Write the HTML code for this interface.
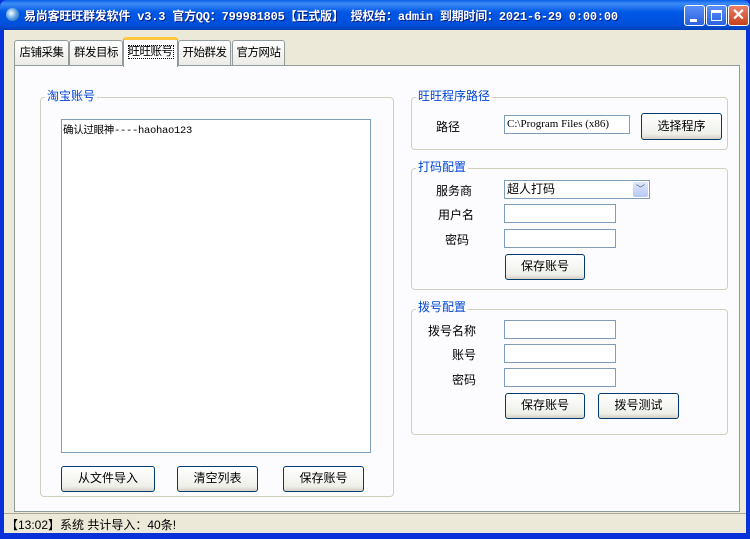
<!DOCTYPE html>
<html><head><meta charset="utf-8"><style>
*{margin:0;padding:0;box-sizing:border-box}
body{width:750px;height:539px;overflow:hidden;background:#0831d9;font-family:"Liberation Sans","Noto Sans CJK SC","WenQuanYi Zen Hei",sans-serif;font-size:12px;color:#000;position:relative}
.a{position:absolute}
#title{left:0;top:0;width:750px;height:30px;background:linear-gradient(#0a5fe8 0%,#3d8bf5 12%,#0058e6 40%,#0050dc 80%,#0340b8 100%);border-radius:7px 7px 0 0}
#title span{position:absolute;left:24px;top:7px;color:#fff;font-weight:bold;font-size:12px;font-family:"Liberation Mono","Noto Sans CJK SC",monospace;white-space:nowrap;text-shadow:1px 1px #0a1f80;letter-spacing:-0.2px}
#body{left:4px;top:30px;width:742px;height:503px;background:#ece9d8}
.tb{height:25px;background:linear-gradient(#fff,#ecebe6);border:1px solid #919b9c;border-bottom:none;border-radius:3px 3px 0 0;text-align:center;line-height:24px;font-size:11.5px;letter-spacing:-0.5px}
#panel{left:14px;top:65px;width:726px;height:447px;background:#fcfcfe;border:1px solid #919b9c}
.g{border:1px solid #d0d0bf;border-radius:4px}
.gl{color:#0046d5;background:#fcfcfe;padding:0 2px;line-height:13px}
.in{background:#fff;border:1px solid #7f9db9;height:19px}
.btn{border:1px solid #003c74;border-radius:3px;background:linear-gradient(#fff,#f0f0ea 80%,#d6d0c5);text-align:center;line-height:23px}
</style></head><body>
<div class="a" id="title"><div class="a" style="left:6px;top:8px;width:13px;height:13px;border-radius:50%;background:radial-gradient(circle at 40% 40%,#fff,#5aa0e0 50%,#1b5fb0)"></div><span>易尚客旺旺群发软件 v3.3 官方QQ：799981805【正式版】 授权给：admin  到期时间：2021-6-29 0:00:00</span>
<div class="a" style="left:684px;top:5px;width:21px;height:21px;border:1px solid #fff;border-radius:3px;background:linear-gradient(#5a8ef8,#2a62e0)"><div class="a" style="left:5px;top:13px;width:7px;height:3px;background:#fff"></div></div>
<div class="a" style="left:706px;top:5px;width:21px;height:21px;border:1px solid #fff;border-radius:3px;background:linear-gradient(#5a8ef8,#2a62e0)"><div class="a" style="left:4px;top:4px;width:11px;height:11px;border:1px solid #fff;border-top-width:3px"></div></div>
<div class="a" style="left:728px;top:5px;width:21px;height:21px;border:1px solid #fff;border-radius:3px;background:linear-gradient(#e8806a,#c8401c);color:#fff;font-weight:bold;font-size:16px;text-align:center;line-height:19px">✕</div>
</div>
<div class="a" id="body"></div>
<div class="a tb" style="left:14px;top:40px;width:55px">店铺采集</div>
<div class="a tb" style="left:69px;top:40px;width:54px">群发目标</div>
<div class="a tb" style="left:178px;top:40px;width:53px">开始群发</div>
<div class="a tb" style="left:232px;top:40px;width:53px">官方网站</div>
<div class="a" id="panel"></div>
<div class="a" style="left:123px;top:37px;width:55px;height:30px;background:#fcfcfe;border:1px solid #919b9c;border-bottom:none;border-top:3px solid #ffc83c;border-radius:3px 3px 0 0;text-align:center;line-height:24px;font-size:11.5px;letter-spacing:-0.5px"><span style="outline:1px dotted #000">旺旺账号</span></div>

<div class="a g" style="left:40px;top:97px;width:354px;height:400px"></div>
<div class="a gl" style="left:45px;top:90px">淘宝账号</div>
<div class="a" style="left:61px;top:119px;width:310px;height:334px;background:#fff;border:1px solid #7f9db9;padding:2px 1px;font-family:'Liberation Mono','Noto Sans CJK SC',monospace;font-size:10.5px;letter-spacing:-0.3px">确认过眼神----haohao123</div>
<div class="a btn" style="left:61px;top:466px;width:94px;height:26px">从文件导入</div>
<div class="a btn" style="left:177px;top:466px;width:81px;height:26px">清空列表</div>
<div class="a btn" style="left:283px;top:466px;width:81px;height:26px">保存账号</div>

<div class="a g" style="left:411px;top:97px;width:317px;height:53px"></div>
<div class="a gl" style="left:416px;top:90px">旺旺程序路径</div>
<div class="a" style="left:436px;top:118px">路径</div>
<div class="a in" style="left:504px;top:115px;width:126px;font-family:'Liberation Serif',serif;font-size:11px;line-height:17px;padding-left:2px;white-space:nowrap;overflow:hidden">C:\Program Files (x86)</div>
<div class="a btn" style="left:641px;top:113px;width:81px;height:27px;line-height:25px">选择程序</div>

<div class="a g" style="left:411px;top:168px;width:317px;height:122px"></div>
<div class="a gl" style="left:416px;top:161px">打码配置</div>
<div class="a" style="left:436px;top:182px">服务商</div>
<div class="a in" style="left:504px;top:180px;width:146px;padding-left:2px;line-height:17px">超人打码<div class="a" style="right:1px;top:1px;width:15px;height:15px;background:linear-gradient(#dfe8fb,#b6c9f4);border-radius:2px;color:#4d6185;font-size:9px;text-align:center;line-height:15px">﹀</div></div>
<div class="a" style="left:438px;top:206px">用户名</div>
<div class="a in" style="left:504px;top:204px;width:112px"></div>
<div class="a" style="left:445px;top:231px">密码</div>
<div class="a in" style="left:504px;top:229px;width:112px"></div>
<div class="a btn" style="left:505px;top:254px;width:80px;height:26px">保存账号</div>

<div class="a g" style="left:411px;top:309px;width:317px;height:126px"></div>
<div class="a gl" style="left:416px;top:301px">拨号配置</div>
<div class="a" style="left:428px;top:322px">拨号名称</div>
<div class="a in" style="left:504px;top:320px;width:112px"></div>
<div class="a" style="left:452px;top:346px">账号</div>
<div class="a in" style="left:504px;top:344px;width:112px"></div>
<div class="a" style="left:452px;top:371px">密码</div>
<div class="a in" style="left:504px;top:368px;width:112px"></div>
<div class="a btn" style="left:505px;top:393px;width:80px;height:26px">保存账号</div>
<div class="a btn" style="left:598px;top:393px;width:81px;height:26px">拨号测试</div>

<div class="a" style="left:4px;top:513px;width:742px;height:1px;background:#aca899"></div>
<div class="a" style="left:6px;top:516px;white-space:nowrap">【13:02】系统 共计导入：40条!</div>
</body></html>
